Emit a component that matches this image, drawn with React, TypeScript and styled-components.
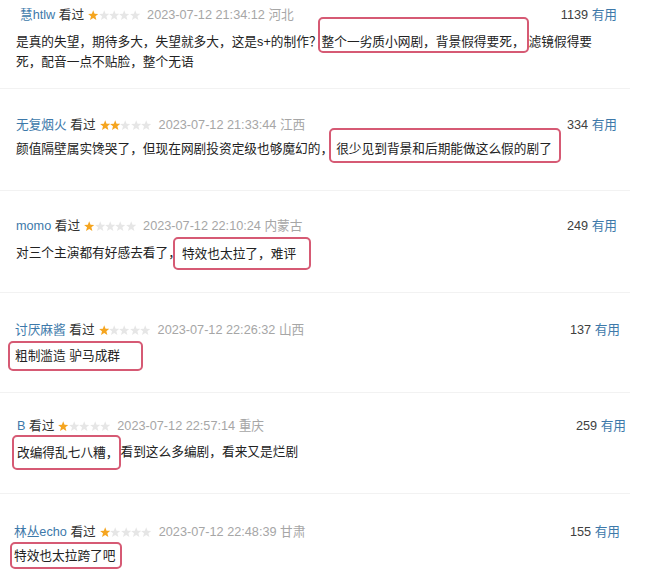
import React from 'react';
import styled, { createGlobalStyle } from 'styled-components';

const Global = createGlobalStyle`
  html, body { margin: 0; padding: 0; background: #fff; }
  body { font-family: "Liberation Sans", "Noto Sans CJK SC", sans-serif; }
`;

const Page = styled.div`
  width: 660px;
  height: 571px;
  overflow: hidden;
  background: #fff;
  display: flex;
  flex-direction: column;
`;

const Item = styled.section<{ $pt: number; $pb: number; $last?: boolean }>`
  padding: ${(p) => p.$pt}px 0 ${(p) => p.$pb}px;
  margin-right: 30px;
  border-bottom: ${(p) => (p.$last ? 'none' : '1px solid #f2f2f2')};
`;

const Header = styled.div<{ $pl: number; $pr: number }>`
  display: flex;
  align-items: center;
  justify-content: space-between;
  height: 20px;
  padding: 0 ${(p) => p.$pr}px 0 ${(p) => p.$pl}px;
  font-size: 12.7px;
  line-height: 20px;
  white-space: nowrap;
`;

const Meta = styled.div`
  display: flex;
  align-items: center;
`;

const Name = styled.span`
  color: #3d79aa;
  margin-right: 3.5px;
`;

const Watched = styled.span`
  color: #333;
  margin-right: 4px;
`;

const Stars = styled.span`
  display: inline-flex;
  align-items: center;
  margin-right: 7px;
`;

const Time = styled.span`
  color: #a6a6a6;
`;

const Votes = styled.span`
  color: #404040;
`;

const Useful = styled.span`
  color: #3d79aa;
`;

const Body = styled.p<{ $pl: number; $gap: number }>`
  margin: ${(p) => p.$gap}px 0 0;
  padding-left: ${(p) => p.$pl}px;
  font-size: 12.7px;
  line-height: 20px;
  color: #222;
  white-space: nowrap;
`;

const Mark = styled.span<{ $b: [number, number, number, number]; $ml: number; $mr: number }>`
  border: 2px solid #d65a74;
  border-radius: 5px;
  padding: ${(p) => p.$b.map((v) => `${v}px`).join(' ')};
  margin-left: ${(p) => p.$ml}px;
  margin-right: ${(p) => p.$mr}px;
`;

const Star: React.FC<{ on: boolean }> = ({ on }) => (
  <svg width="10.4" height="11" viewBox="0 0 10 10.5">
    <path
      d="M5 0.2 L6.3 3.5 L9.9 3.7 L7.1 6 L8.05 9.6 L5 7.6 L1.95 9.6 L2.9 6 L0.1 3.7 L3.7 3.5 Z"
      fill={on ? '#f5a51f' : '#e6e6e6'}
    />
  </svg>
);

type Seg = { t: string; mark?: { b: [number, number, number, number]; ml: number; mr: number } } | { br: true };

type Review = {
  name: string;
  stars: number;
  time: string;
  votes: string;
  pt: number;
  pb: number;
  hpl: number;
  hpr: number;
  bpl: number;
  gap: number;
  body: Seg[];
};

const reviews: Review[] = [
  {
    name: '慧htlw', stars: 1, time: '2023-07-12 21:34:12 河北', votes: '1139',
    pt: 5, pb: 16, hpl: 20, hpr: 13, bpl: 16, gap: 7,
    body: [
      { t: '是真的失望，期待多大，失望就多大，这是s+的制作？' },
      { t: '整个一劣质小网剧，背景假得要死，', mark: { b: [16, 2, 2, 2], ml: -4, mr: 0 } },
      { t: '滤镜假得要' },
      { br: true },
      { t: '死，配音一点不贴脸，整个无语' },
    ],
  },
  {
    name: '无复烟火', stars: 2, time: '2023-07-12 21:33:44 江西', votes: '334',
    pt: 26, pb: 31, hpl: 16, hpr: 13, bpl: 16, gap: 4,
    body: [
      { t: '颜值隔壁属实馋哭了，但现在网剧投资定级也够魔幻的，' },
      { t: '很少见到背景和后期能做这么假的剧了', mark: { b: [12, 7, 5, 5], ml: -4, mr: 0 } },
    ],
  },
  {
    name: 'momo', stars: 1, time: '2023-07-12 22:10:24 内蒙古', votes: '249',
    pt: 25, pb: 29, hpl: 16, hpr: 13, bpl: 16, gap: 7,
    body: [
      { t: '对三个主演都有好感去看了，' },
      { t: '特效也太拉了，难评', mark: { b: [7.5, 13, 7.5, 7], ml: -8, mr: 0 } },
    ],
  },
  {
    name: '讨厌麻酱', stars: 1, time: '2023-07-12 22:26:32 山西', votes: '137',
    pt: 27, pb: 26, hpl: 15, hpr: 10, bpl: 8, gap: 6,
    body: [{ t: '粗制滥造 驴马成群', mark: { b: [6, 21, 6, 5], ml: 0, mr: 0 } }],
  },
  {
    name: 'B', stars: 1, time: '2023-07-12 22:57:14 重庆', votes: '259',
    pt: 23, pb: 31, hpl: 17, hpr: 4, bpl: 12, gap: 6,
    body: [
      { t: '改编得乱七八糟，', mark: { b: [8.5, 0, 8.5, 3], ml: 0, mr: 0 } },
      { t: '看到这么多编剧，看来又是烂剧' },
    ],
  },
  {
    name: '林丛echo', stars: 1, time: '2023-07-12 22:48:39 甘肃', votes: '155',
    pt: 28, pb: 6, hpl: 14, hpr: 10, bpl: 10, gap: 3,
    body: [{ t: '特效也太拉跨了吧', mark: { b: [4.5, 4, 4.5, 2], ml: 0, mr: 0 } }],
  },
];

export default function App() {
  return (
    <>
      <Global />
      <Page>
        {reviews.map((r, i) => (
          <Item key={i} $pt={r.pt} $pb={r.pb} $last={i === reviews.length - 1}>
            <Header $pl={r.hpl} $pr={r.hpr}>
              <Meta>
                <Name>{r.name}</Name>
                <Watched>看过</Watched>
                <Stars>
                  {[0, 1, 2, 3, 4].map((s) => (
                    <Star key={s} on={s < r.stars} />
                  ))}
                </Stars>
                <Time>{r.time}</Time>
              </Meta>
              <Votes>
                {r.votes} <Useful>有用</Useful>
              </Votes>
            </Header>
            <Body $pl={r.bpl} $gap={r.gap}>
              {r.body.map((s, j) =>
                'br' in s ? (
                  <br key={j} />
                ) : s.mark ? (
                  <Mark key={j} $b={s.mark.b} $ml={s.mark.ml} $mr={s.mark.mr}>
                    {s.t}
                  </Mark>
                ) : (
                  <React.Fragment key={j}>{s.t}</React.Fragment>
                )
              )}
            </Body>
          </Item>
        ))}
      </Page>
    </>
  );
}
